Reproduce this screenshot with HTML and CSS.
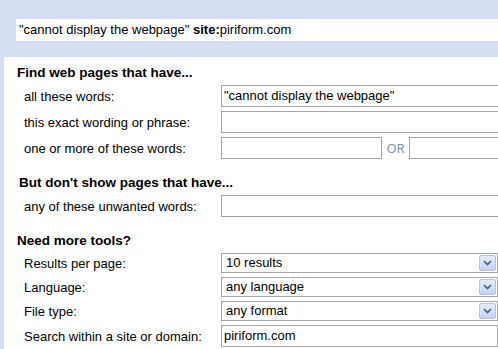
FILE: index.html
```html
<!DOCTYPE html>
<html>
<head>
<meta charset="utf-8">
<link rel="stylesheet" href="styles.css">
</head>
<body>
<div class="topband">
  <div class="query">"cannot display the webpage" <b>site:</b>piriform.com</div>
</div>
<div class="panel">
  <h2 class="heading">Find web pages that have...</h2>
  <div class="row">
    <span class="label">all these words:</span>
    <div class="input wide">"cannot display the webpage"</div>
  </div>
  <div class="row">
    <span class="label">this exact wording or phrase:</span>
    <div class="input wide"></div>
  </div>
  <div class="row">
    <span class="label">one or more of these words:</span>
    <div class="input short"></div>
    <span class="or">OR</span>
    <div class="input wide"></div>
  </div>

  <h2 class="heading heading-but">But don't show pages that have...</h2>
  <div class="row">
    <span class="label">any of these unwanted words:</span>
    <div class="input wide"></div>
  </div>

  <h2 class="heading heading-tools">Need more tools?</h2>
  <div class="row row-sel">
    <span class="label">Results per page:</span>
    <div class="select"><span class="sel-text">10 results</span><span class="sel-btn"><svg width="9" height="6" viewBox="0 0 9 6"><path d="M1 1 L4.5 4.5 L8 1" fill="none" stroke="#4a5d84" stroke-width="1.6"/></svg></span></div>
  </div>
  <div class="row row-sel">
    <span class="label">Language:</span>
    <div class="select"><span class="sel-text">any language</span><span class="sel-btn"><svg width="9" height="6" viewBox="0 0 9 6"><path d="M1 1 L4.5 4.5 L8 1" fill="none" stroke="#4a5d84" stroke-width="1.6"/></svg></span></div>
  </div>
  <div class="row row-sel">
    <span class="label">File type:</span>
    <div class="select"><span class="sel-text">any format</span><span class="sel-btn"><svg width="9" height="6" viewBox="0 0 9 6"><path d="M1 1 L4.5 4.5 L8 1" fill="none" stroke="#4a5d84" stroke-width="1.6"/></svg></span></div>
  </div>
  <div class="row">
    <span class="label">Search within a site or domain:</span>
    <div class="input site">piriform.com</div>
  </div>
</div>
</body>
</html>
```
FILE: styles.css
```css
html, body {
  margin: 0;
  padding: 0;
  background: #ffffff;
  overflow: hidden;
}
body {
  width: 498px;
  height: 349px;
  font-family: "Liberation Sans", Arial, sans-serif;
  font-size: 13px;
  color: #000;
}
.topband {
  background: #d5ddf3;
  padding: 19px 0 16px 16px;
}
.query {
  background: #fff;
  height: 22px;
  line-height: 22px;
  padding-left: 3px;
  white-space: nowrap;
}
.panel {
  box-sizing: border-box;
  border-left: 4px solid #d5ddf3;
  padding-top: 8px;
  height: 292px;
  overflow: hidden;
}
.heading {
  margin: 0;
  font-size: 13.5px;
  font-weight: bold;
  line-height: 16px;
  height: 16px;
  padding-left: 13px;
  white-space: nowrap;
}
.heading-but {
  margin-top: 16px;
  padding-left: 15px;
}
.heading-tools {
  margin-top: 16px;
}
.row {
  display: flex;
  align-items: center;
  height: 22px;
  margin-top: 4px;
  white-space: nowrap;
}
.row-sel {
  height: 20px;
}
.label {
  flex: none;
  width: 197px;
  padding-left: 20px;
}
.input {
  flex: none;
  box-sizing: border-box;
  height: 22px;
  border: 1px solid #a5a5a5;
  line-height: 20px;
  padding-left: 2px;
  background: #fff;
}
.wide {
  width: 320px;
}
.short {
  width: 161px;
}
.site {
  width: 277px;
}
.or {
  flex: none;
  width: 27px;
  text-align: center;
  font-family: "Noto Sans", "Open Sans", sans-serif;
  font-size: 13px;
  color: #8496ad;
}
.select {
  flex: none;
  box-sizing: border-box;
  width: 277px;
  height: 20px;
  border: 1px solid #a5a5a5;
  display: flex;
  align-items: center;
  padding: 0 1px 0 4px;
}
.sel-text {
  flex: 1;
  line-height: 18px;
}
.sel-btn {
  flex: none;
  box-sizing: border-box;
  width: 17px;
  height: 16px;
  border: 1px solid #b2c3e4;
  border-radius: 2px;
  background: linear-gradient(#e3ebf9, #c3d3f0);
  display: flex;
  align-items: center;
  justify-content: center;
}
.sel-btn svg {
  display: block;
}
```
